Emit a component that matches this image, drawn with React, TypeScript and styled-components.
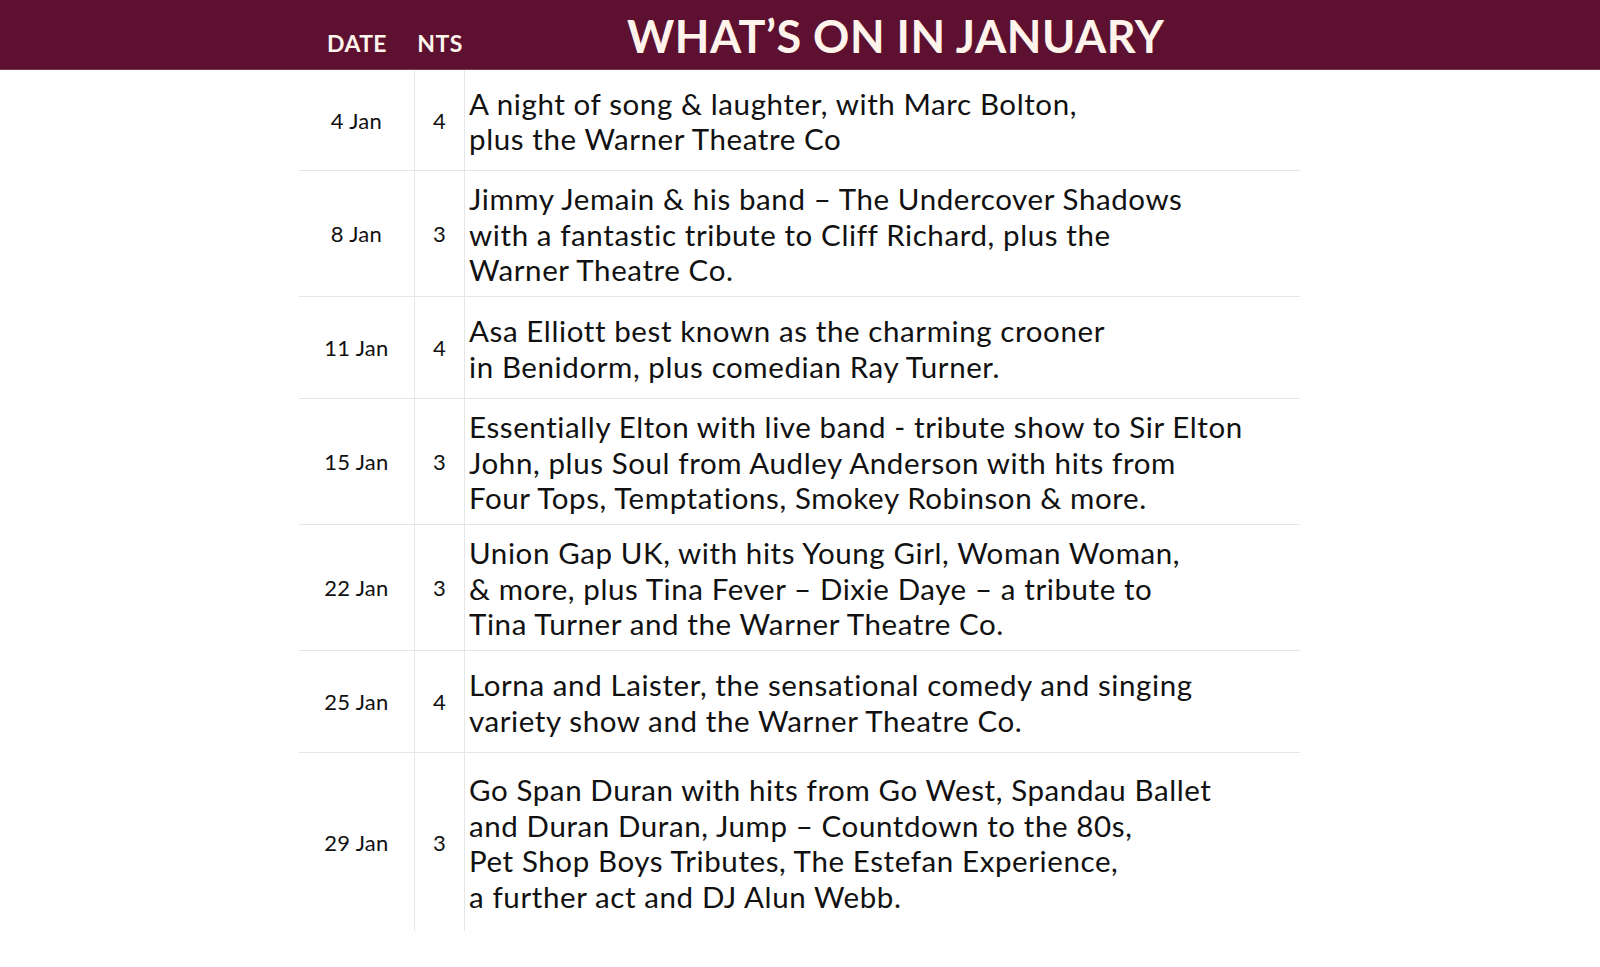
import React from "react";
import styled, { createGlobalStyle } from "styled-components";

const Global = createGlobalStyle`
  html, body { margin: 0; padding: 0; background: #ffffff; }
  body { font-family: Lato, "Noto Sans", sans-serif; color: #111; }
`;

const Page = styled.div`
  width: 1600px;
  min-height: 967px;
  background: #fff;
`;

const Header = styled.header`
  height: 69px;
  background: #5d1030;
  border-bottom: 1px solid #7e3a55;
`;

const HeaderInner = styled.div`
  margin-left: 299px;
  width: 1001px;
  height: 100%;
  display: grid;
  grid-template-columns: 116px 50px 1fr;
  align-items: end;
  padding-bottom: 14px;
  box-sizing: border-box;
`;

const ColHead = styled.div`
  font-family: Lato, sans-serif;
  font-weight: 700;
  font-size: 23px;
  line-height: 1;
  color: #fff4ec;
  text-align: center;
  letter-spacing: 0.4px;
`;

const Title = styled.h1`
  margin: 0 0 -4px 0;
  padding-left: 162px;
  font-family: Lato, sans-serif;
  font-weight: 700;
  font-size: 45px;
  line-height: 1;
  letter-spacing: 0.5px;
  color: #fff4ec;
  white-space: nowrap;
`;

const Table = styled.div`
  margin-left: 299px;
  width: 1001px;
  display: flex;
  flex-direction: column;
`;

const Row = styled.div<{ $h: number; $last?: boolean }>`
  display: grid;
  grid-template-columns: 116px 50px 1fr;
  height: ${(p) => p.$h}px;
  border-bottom: ${(p) => (p.$last ? "none" : "1px solid #e6e6e6")};
  box-sizing: border-box;
`;

const Cell = styled.div`
  display: flex;
  align-items: center;
  justify-content: center;
  border-right: 1px solid #e6e6e6;
  font-size: 22px;
  letter-spacing: 0.3px;
  color: #111;
`;

const Desc = styled.div`
  display: flex;
  align-items: center;
  padding-left: 4px;
  font-size: 29.5px;
  letter-spacing: 0.6px;
  line-height: 35.5px;
  color: #111;
  padding-top: 2px;
  white-space: nowrap;
`;

type Ev = { date: string; nts: string; lines: string[]; h: number };

const events: Ev[] = [
  { date: "4 Jan", nts: "4", h: 101, lines: ["A night of song & laughter, with Marc Bolton,", "plus the Warner Theatre Co"] },
  { date: "8 Jan", nts: "3", h: 126, lines: ["Jimmy Jemain & his band – The Undercover Shadows", "with a fantastic tribute to Cliff Richard, plus the", "Warner Theatre Co."] },
  { date: "11 Jan", nts: "4", h: 102, lines: ["Asa Elliott best known as the charming crooner", "in Benidorm, plus comedian Ray Turner."] },
  { date: "15 Jan", nts: "3", h: 126, lines: ["Essentially Elton with live band - tribute show to Sir Elton", "John, plus Soul from Audley Anderson with hits from", "Four Tops, Temptations, Smokey Robinson & more."] },
  { date: "22 Jan", nts: "3", h: 126, lines: ["Union Gap UK, with hits Young Girl, Woman Woman,", "& more, plus Tina Fever – Dixie Daye – a tribute to", "Tina Turner and the Warner Theatre Co."] },
  { date: "25 Jan", nts: "4", h: 102, lines: ["Lorna and Laister, the sensational comedy and singing", "variety show and the Warner Theatre Co."] },
  { date: "29 Jan", nts: "3", h: 178, lines: ["Go Span Duran with hits from Go West, Spandau Ballet", "and Duran Duran, Jump – Countdown to the 80s,", "Pet Shop Boys Tributes, The Estefan Experience,", "a further act and DJ Alun Webb."] },
];

export default function App() {
  return (
    <Page>
      <Global />
      <Header>
        <HeaderInner>
          <ColHead>DATE</ColHead>
          <ColHead>NTS</ColHead>
          <Title>WHAT’S ON IN JANUARY</Title>
        </HeaderInner>
      </Header>
      <Table>
        {events.map((e, i) => (
          <Row key={e.date} $h={e.h} $last={i === events.length - 1}>
            <Cell>{e.date}</Cell>
            <Cell>{e.nts}</Cell>
            <Desc>
              <div>
                {e.lines.map((l, j) => (
                  <React.Fragment key={j}>
                    {l}
                    {j < e.lines.length - 1 && <br />}
                  </React.Fragment>
                ))}
              </div>
            </Desc>
          </Row>
        ))}
      </Table>
    </Page>
  );
}
